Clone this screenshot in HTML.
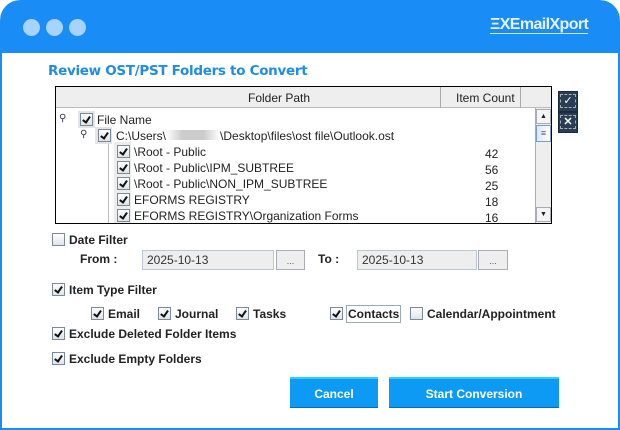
<!DOCTYPE html>
<html><head><meta charset="utf-8"><style>
*{margin:0;padding:0;box-sizing:border-box}
body{width:620px;height:430px;background:#fff;font-family:"Liberation Sans",Arial,sans-serif;font-size:12px;color:#222;position:relative;overflow:hidden}
.win{position:absolute;left:0;top:0;width:620px;height:430px;border-radius:20px 20px 0 0;background:#fff;overflow:hidden}
.frame{position:absolute;left:0;top:30px;width:620px;height:400px;border:2px solid #1a8cf5;border-top:none;pointer-events:none}
.title{position:absolute;left:0;top:0;width:620px;height:53px;background:#1a8cf5;border-radius:20px 20px 0 0}
.dot{position:absolute;top:19px;width:17px;height:17px;border-radius:50%;background:#a6d3ff}
.logo{position:absolute;left:490px;top:16px;color:#e6f2ff;font-size:16px;font-weight:bold;letter-spacing:-0.6px}
.logo span{border-bottom:1px solid #cfe5ff}
.a{position:absolute;white-space:nowrap}
.h{left:48px;top:63px;color:#1f8ce6;font-weight:bold;font-size:13.5px;font-family:"DejaVu Sans",sans-serif;letter-spacing:-0.3px}
.tbl{position:absolute;left:55px;top:86px;width:497px;height:138px;border:1px solid #000;background:#fff}
.hdr{position:absolute;left:0;top:0;width:495px;height:21px;background:#eee;border-bottom:1px solid #bbb}
.cb{position:absolute;width:13px;height:13px;border:1px solid #7a8a99;background:linear-gradient(#fdfdfd,#dfe4ea)}
.cb.c::after{content:"";position:absolute;left:3px;top:1px;width:3px;height:6px;border:solid #111;border-width:0 2px 2px 0;transform:rotate(35deg)}
.b{font-weight:bold}
.btn{position:absolute;top:377px;height:31px;background:#0d9af5;color:#fff;font-weight:bold;font-size:12px;text-align:center;line-height:31px;border-top:2px solid #2fd0f5;border-bottom:1px solid #0a6db0}
.inp{position:absolute;top:250px;height:20px;background:#eee;border:1px solid #b8c8d8;padding-left:4px;line-height:19px;font-size:12px;color:#333}
.dd{position:absolute;top:250px;height:20px;background:#eee;border:1px solid #aab;text-align:center;font-size:9px;line-height:20px;color:#555}
.ln{position:absolute;background:#aaa}
</style></head><body>
<div class="win">
<div class="title">
<div class="dot" style="left:23px"></div><div class="dot" style="left:46px"></div><div class="dot" style="left:69px"></div>
<div class="logo"><span>ΞXEmailXport</span></div>
</div>
<div class="a h">Review OST/PST Folders to Convert</div>
<div class="tbl">
<div class="hdr"></div>
<div class="a" style="left:192px;top:4px;">Folder Path</div>
<div class="ln" style="left:384px;top:0;width:1px;height:21px"></div>
<div class="a" style="left:400px;top:4px;">Item Count</div>
<div class="ln" style="left:464px;top:0;width:1px;height:21px"></div>
<div style="position:absolute;left:479px;top:21px;width:16px;height:115px;background:#eee;border-left:1px solid #aab"></div>
<div style="position:absolute;left:480px;top:22px;width:15px;height:15px;background:#f4f4f4;border:1px solid #aab;font-size:7px;text-align:center;line-height:14px">▲</div>
<div style="position:absolute;left:480px;top:38px;width:15px;height:17px;background:linear-gradient(90deg,#dbe8f8,#fff);border:1px solid #7a9cc8;font-size:9px;text-align:center;line-height:14px;color:#557">≡</div>
<div style="position:absolute;left:480px;top:120px;width:15px;height:15px;background:#f4f4f4;border:1px solid #aab;font-size:7px;text-align:center;line-height:14px">▼</div>
<div class="a" style="left:3px;top:26px;font-size:10px;color:#335">⚲</div>
<div class="a" style="left:24px;top:42px;font-size:10px;color:#335">⚲</div>
<div class="ln" style="left:52px;top:55px;width:1px;height:81px;background:#bbb"></div>
<div style="position:absolute;left:22px;top:24px;width:17px;height:17px;background:#e4e4e4"></div>
<div class="cb c" style="left:24px;top:26px"></div>
<div class="a" style="left:41px;top:26px">File Name</div>
<div style="position:absolute;left:39px;top:40px;width:17px;height:17px;background:#e4e4e4"></div>
<div class="cb c" style="left:42px;top:42px"></div>
<div class="a" style="left:60px;top:42px">C:\Users\<span style="display:inline-block;width:54px;height:10px;background:linear-gradient(90deg,#fff,#ccc 30%,#ccc 70%,#fff)"></span>\Desktop\files\ost file\Outlook.ost</div>
<div style="position:absolute;left:58px;top:55px;width:17px;height:81px;background:#ececec"></div>
<div class="cb c" style="left:61px;top:58px"></div><div class="a" style="left:78px;top:58px">\Root - Public</div><div class="a" style="left:429px;top:60px">42</div>
<div class="cb c" style="left:61px;top:74px"></div><div class="a" style="left:78px;top:74px">\Root - Public\IPM_SUBTREE</div><div class="a" style="left:429px;top:76px">56</div>
<div class="cb c" style="left:61px;top:90px"></div><div class="a" style="left:78px;top:90px">\Root - Public\NON_IPM_SUBTREE</div><div class="a" style="left:429px;top:92px">25</div>
<div class="cb c" style="left:61px;top:106px"></div><div class="a" style="left:78px;top:106px">EFORMS REGISTRY</div><div class="a" style="left:429px;top:108px">18</div>
<div class="cb c" style="left:61px;top:122px"></div><div class="a" style="left:78px;top:122px">EFORMS REGISTRY\Organization Forms</div><div class="a" style="left:429px;top:124px">16</div>
</div>
<div style="position:absolute;left:558px;top:91px;width:20px;height:21px;background:#2b3d55;border:1px solid #1c2a3c;color:#fff;font-size:11px;text-align:center;line-height:19px"><span style="border:1px dashed #aab;padding:0 2px">✓</span></div>
<div style="position:absolute;left:558px;top:112px;width:20px;height:21px;background:#2b3d55;border:1px solid #1c2a3c;color:#fff;font-size:11px;font-weight:bold;text-align:center;line-height:19px"><span style="border:1px dashed #aab;padding:0 2px">✕</span></div>

<div class="cb" style="left:52px;top:233px"></div><div class="a b" style="left:69px;top:233px">Date Filter</div>
<div class="a b" style="left:80px;top:252px">From :</div>
<div class="inp" style="left:142px;width:132px">2025-10-13</div><div class="dd" style="left:276px;width:29px">...</div>
<div class="a b" style="left:318px;top:252px">To :</div>
<div class="inp" style="left:357px;width:120px">2025-10-13</div><div class="dd" style="left:478px;width:30px">...</div>

<div class="cb c" style="left:52px;top:283px"></div><div class="a b" style="left:69px;top:283px">Item Type Filter</div>
<div class="cb c" style="left:91px;top:307px"></div><div class="a b" style="left:108px;top:307px">Email</div>
<div class="cb c" style="left:158px;top:307px"></div><div class="a b" style="left:175px;top:307px">Journal</div>
<div class="cb c" style="left:236px;top:307px"></div><div class="a b" style="left:253px;top:307px">Tasks</div>
<div class="cb c" style="left:330px;top:307px"></div><div class="a b" style="left:346px;top:305px;border:1px solid #9ab;padding:1px 1px;line-height:14px">Contacts</div>
<div class="cb" style="left:410px;top:307px"></div><div class="a b" style="left:427px;top:307px">Calendar/Appointment</div>
<div class="cb c" style="left:52px;top:327px"></div><div class="a b" style="left:69px;top:327px">Exclude Deleted Folder Items</div>
<div class="cb c" style="left:52px;top:352px"></div><div class="a b" style="left:69px;top:352px">Exclude Empty Folders</div>

<div class="btn" style="left:290px;width:88px">Cancel</div>
<div class="btn" style="left:389px;width:170px">Start Conversion</div>
<div class="frame"></div>
</div>
</body></html>
